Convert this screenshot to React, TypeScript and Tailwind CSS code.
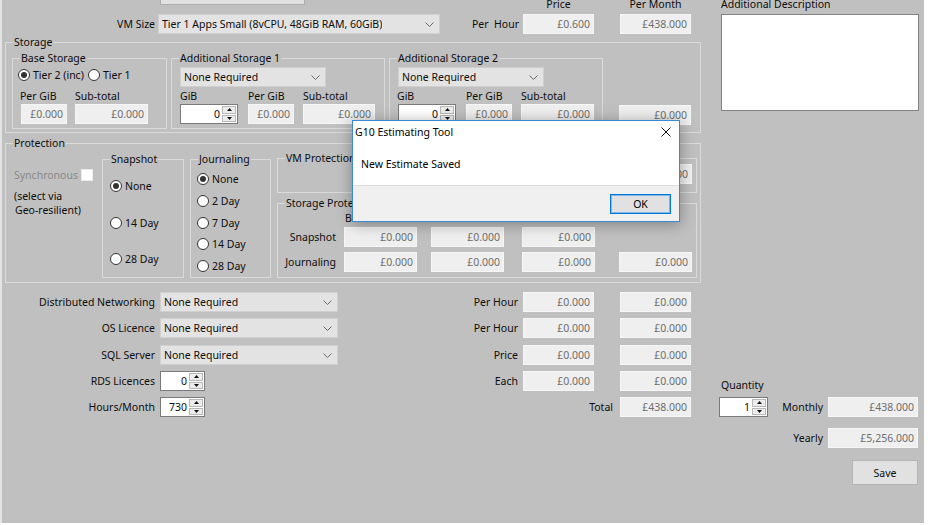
import React from "react";

function RO({ value = "£0.000", className = "" }: { value?: string; className?: string }) {
  return (
    <div
      className={`flex h-[20px] shrink-0 items-center justify-end border border-[#f6f6f6] bg-[#efefef] pr-[3px] text-[#6d6d6d] ${className}`}
    >
      {value}
    </div>
  );
}

function Chevron() {
  return (
    <svg width="9" height="5" viewBox="0 0 9 5" className="shrink-0">
      <polyline points="0.5,0.5 4.5,4.5 8.5,0.5" fill="none" stroke="#6a6a6a" strokeWidth="1" />
    </svg>
  );
}

function Combo({ value, className = "" }: { value: string; className?: string }) {
  return (
    <div
      className={`flex h-[20px] shrink-0 items-center justify-between border border-[#d0d0d0] bg-[#e3e3e3] pl-[3px] pr-[5px] ${className}`}
    >
      <span className="truncate">{value}</span>
      <Chevron />
    </div>
  );
}

function Tri({ up }: { up?: boolean }) {
  return (
    <svg width="5" height="3" viewBox="0 0 5 3">
      <polygon points={up ? "0,3 5,3 2.5,0" : "0,0 5,0 2.5,3"} fill="#111" />
    </svg>
  );
}

function Spin({ value, className = "" }: { value: string; className?: string }) {
  return (
    <div className={`flex h-[20px] shrink-0 border border-[#7a7a7a] bg-white ${className}`}>
      <span className="flex flex-1 items-center justify-end pr-[2px]">{value}</span>
      <div className="flex w-[15px] flex-col gap-[1px] py-[1px] pr-[1px]">
        <div className="flex flex-1 items-center justify-center border border-[#b8b8b8] bg-[#ececec]">
          <Tri up />
        </div>
        <div className="flex flex-1 items-center justify-center border border-[#b8b8b8] bg-[#ececec]">
          <Tri />
        </div>
      </div>
    </div>
  );
}

function Radio({ label, checked, className = "" }: { label: string; checked?: boolean; className?: string }) {
  return (
    <div className={`flex h-[16px] items-center ${className}`}>
      <span className="flex h-[12px] w-[12px] shrink-0 items-center justify-center rounded-full border border-[#333] bg-white">
        {checked && <span className="h-[6px] w-[6px] rounded-full bg-[#333]" />}
      </span>
      <span className="ml-[3px]">{label}</span>
    </div>
  );
}

function Group({ title, className = "", children }: { title: string; className?: string; children?: React.ReactNode }) {
  return (
    <fieldset className={`shrink-0 border border-[#dadada] ${className}`}>
      <legend className="ml-[7px] px-[1px] leading-[14px]">{title}</legend>
      {children}
    </fieldset>
  );
}

function CloseX() {
  return (
    <svg width="10" height="10" viewBox="0 0 10 10">
      <path d="M0.5 0.5 L9.5 9.5 M9.5 0.5 L0.5 9.5" stroke="#111" strokeWidth="1" />
    </svg>
  );
}

export default function App() {
  return (
    <div className="flex h-[525px] w-[939px] overflow-hidden whitespace-nowrap bg-white font-['Noto_Sans',sans-serif] text-[10.5px] leading-[14px] text-[#0d0d0d]">
      <div className="h-[523px] w-[2px] bg-[#e4e4e4]" />
      <div className="relative flex h-[523px] w-[922px] bg-[#c0c0c0]">
        {/* left side */}
        <div className="flex w-[699px] flex-col">
          <div className="mt-[-3px] flex h-[14px] items-start">
            <div className="ml-[158px] mt-[-10px] h-[18px] w-[145px] border border-[#adadad] bg-[#e1e1e1]" />
            <span className="ml-[218px] w-[71px] text-center">Price</span>
            <span className="ml-[26px] w-[71px] text-center">Per Month</span>
          </div>

          <div className="mt-[3px] flex h-[20px] items-center">
            <span className="w-[153px] text-right">VM Size</span>
            <Combo className="ml-[3px] w-[282px]" value="Tier 1 Apps Small (8vCPU, 48GiB RAM, 60GiB)" />
            <span className="w-[79px] whitespace-pre text-right">Per  Hour</span>
            <RO className="ml-[4px] w-[71px]" value="£0.600" />
            <RO className="ml-[26px] w-[71px]" value="£438.000" />
          </div>

          <Group title="Storage" className="ml-[3px] mt-[1px] h-[98px] w-[696px]">
            <div className="flex items-start">
              <Group title="Base Storage" className="ml-[6px] mt-[2px] h-[78px] w-[155px]">
                <div className="ml-[5px] mt-[2px] flex">
                  <Radio className="w-[70px]" label="Tier 2 (inc)" checked />
                  <Radio label="Tier 1" />
                </div>
                <div className="ml-[7px] mt-[6px] flex h-[14px]">
                  <span className="w-[55px]">Per GiB</span>
                  <span>Sub-total</span>
                </div>
                <div className="ml-[8px] mt-[1px] flex">
                  <RO className="w-[46px]" />
                  <RO className="ml-[8px] w-[73px]" />
                </div>
              </Group>

              <Group title="Additional Storage 1" className="ml-[4px] mt-[2px] h-[78px] w-[214px]">
                <Combo className="ml-[8px] mt-[2px] w-[146px]" value="None Required" />
                <div className="ml-[8px] mt-[2px] flex h-[14px]">
                  <span className="w-[68px]">GiB</span>
                  <span className="w-[55px]">Per GiB</span>
                  <span>Sub-total</span>
                </div>
                <div className="ml-[8px] mt-[1px] flex">
                  <Spin className="w-[58px]" value="0" />
                  <RO className="ml-[10px] w-[46px]" />
                  <RO className="ml-[9px] w-[72px]" />
                </div>
              </Group>

              <Group title="Additional Storage 2" className="ml-[4px] mt-[2px] h-[78px] w-[214px]">
                <Combo className="ml-[8px] mt-[2px] w-[146px]" value="None Required" />
                <div className="ml-[7px] mt-[2px] flex h-[14px]">
                  <span className="w-[69px]">GiB</span>
                  <span className="w-[55px]">Per GiB</span>
                  <span>Sub-total</span>
                </div>
                <div className="ml-[8px] mt-[1px] flex">
                  <Spin className="w-[58px]" value="0" />
                  <RO className="ml-[10px] w-[46px]" />
                  <RO className="ml-[9px] w-[73px]" />
                </div>
              </Group>

              <RO className="ml-[16px] mt-[56px] w-[72px]" />
            </div>
          </Group>

          <Group title="Protection" className="ml-[3px] mt-[3px] h-[147px] w-[696px]">
            <div className="flex items-start">
              <div className="w-[96px] shrink-0 pl-[8px]">
                <div className="mt-[18px] flex h-[14px] items-center">
                  <span className="text-[#8a8a8a]">Synchronous</span>
                  <span className="ml-[3px] h-[12px] w-[12px] shrink-0 border border-[#ececec] bg-white" />
                </div>
                <div className="mt-[7px]">(select via</div>
                <div className="pl-[1px]">Geo-resilient)</div>
              </div>

              <Group title="Snapshot" className="mt-[2px] h-[126px] w-[82px]">
                <Radio className="ml-[7px] mt-[12px]" label="None" checked />
                <Radio className="ml-[7px] mt-[21px]" label="14 Day" />
                <Radio className="ml-[7px] mt-[20px]" label="28 Day" />
              </Group>

              <Group title="Journaling" className="ml-[6px] mt-[2px] h-[126px] w-[81px]">
                <Radio className="ml-[6px] mt-[5px]" label="None" checked />
                <Radio className="ml-[6px] mt-[6px]" label="2 Day" />
                <Radio className="ml-[6px] mt-[6px]" label="7 Day" />
                <Radio className="ml-[6px] mt-[5px]" label="14 Day" />
                <Radio className="ml-[6px] mt-[6px]" label="28 Day" />
              </Group>

              <div className="ml-[6px] flex w-[420px] shrink-0 flex-col">
                <Group title="VM Protection" className="mt-[1px] h-[42px] w-full">
                  <div className="mt-[-1px] flex justify-end pr-[4px]">
                    <RO className="w-[72px]" />
                  </div>
                </Group>
                <Group title="Storage Protection" className="mt-[3px] h-[82px] w-full">
                  <div className="mt-[1px] flex h-[14px]">
                    <span className="ml-[67px]">Base</span>
                  </div>
                  <div className="mt-[2px] flex h-[20px] items-center">
                    <span className="w-[58px] text-right">Snapshot</span>
                    <RO className="ml-[8px] w-[73px]" />
                    <RO className="ml-[14px] w-[73px]" />
                    <RO className="ml-[18px] w-[73px]" />
                  </div>
                  <div className="mt-[5px] flex h-[20px] items-center">
                    <span className="w-[58px] text-right">Journaling</span>
                    <RO className="ml-[8px] w-[73px]" />
                    <RO className="ml-[14px] w-[73px]" />
                    <RO className="ml-[18px] w-[73px]" />
                    <RO className="ml-[24px] w-[73px]" />
                  </div>
                </Group>
              </div>
            </div>
          </Group>

          <div className="mt-[9px] flex h-[20px] items-center">
            <span className="w-[153px] text-right">Distributed Networking</span>
            <Combo className="ml-[5px] w-[178px]" value="None Required" />
            <span className="w-[180px] text-right">Per Hour</span>
            <RO className="ml-[5px] w-[71px]" />
            <RO className="ml-[26px] w-[71px]" />
          </div>
          <div className="mt-[6px] flex h-[20px] items-center">
            <span className="w-[153px] text-right">OS Licence</span>
            <Combo className="ml-[5px] w-[178px]" value="None Required" />
            <span className="w-[180px] text-right">Per Hour</span>
            <RO className="ml-[5px] w-[71px]" />
            <RO className="ml-[26px] w-[71px]" />
          </div>
          <div className="mt-[7px] flex h-[20px] items-center">
            <span className="w-[153px] text-right">SQL Server</span>
            <Combo className="ml-[5px] w-[178px]" value="None Required" />
            <span className="w-[180px] text-right">Price</span>
            <RO className="ml-[5px] w-[71px]" />
            <RO className="ml-[26px] w-[71px]" />
          </div>
          <div className="mt-[6px] flex h-[20px] items-center">
            <span className="w-[153px] text-right">RDS Licences</span>
            <Spin className="ml-[5px] w-[45px]" value="0" />
            <span className="w-[313px] text-right">Each</span>
            <RO className="ml-[5px] w-[71px]" />
            <RO className="ml-[26px] w-[71px]" />
          </div>
          <div className="mt-[6px] flex h-[20px] items-center">
            <span className="w-[153px] text-right">Hours/Month</span>
            <Spin className="ml-[5px] w-[45px]" value="730" />
            <span className="w-[408px] text-right">Total</span>
            <RO className="ml-[7px] w-[71px]" value="£438.000" />
          </div>
        </div>

        {/* right side */}
        <div className="flex flex-col pl-[20px]">
          <div className="mt-[-3px] h-[14px]">Additional Description</div>
          <div className="mt-[3px] h-[97px] w-[198px] border border-[#828282] bg-white" />
          <div className="mt-[267px] h-[14px]">Quantity</div>
          <div className="mt-[5px] flex h-[20px] items-center">
            <Spin className="ml-[-2px] w-[49px]" value="1" />
            <span className="w-[55px] text-right">Monthly</span>
            <RO className="ml-[5px] w-[90px]" value="£438.000" />
          </div>
          <div className="mt-[11px] flex h-[20px] items-center">
            <span className="w-[102px] text-right">Yearly</span>
            <RO className="ml-[5px] w-[90px]" value="£5,256.000" />
          </div>
          <div className="ml-[131px] mt-[12px] flex h-[25px] w-[66px] items-center justify-center border border-[#b4b4b4] bg-[#e1e1e1]">
            Save
          </div>
        </div>

        {/* message box */}
        <div className="absolute left-[350px] top-[120px] flex h-[102px] w-[328px] flex-col border border-[#3a8ad6] bg-white text-black shadow-[0_2px_14px_rgba(0,0,0,0.35)]">
          <div className="flex h-[22px] items-center justify-between pl-[2px] pr-[8px]">
            <span>G10 Estimating Tool</span>
            <CloseX />
          </div>
          <div className="h-[42px] pl-[8px] pt-[14px]">New Estimate Saved</div>
          <div className="flex flex-1 items-start justify-end border-t border-[#dfdfdf] bg-[#f0f0f0] pr-[8px] pt-[8px]">
            <div className="flex h-[20px] w-[61px] items-center justify-center border border-[#0078d7] bg-[#e1e1e1] shadow-[inset_0_0_0_1px_#7fb7e8]">
              OK
            </div>
          </div>
        </div>
      </div>
    </div>
  );
}
